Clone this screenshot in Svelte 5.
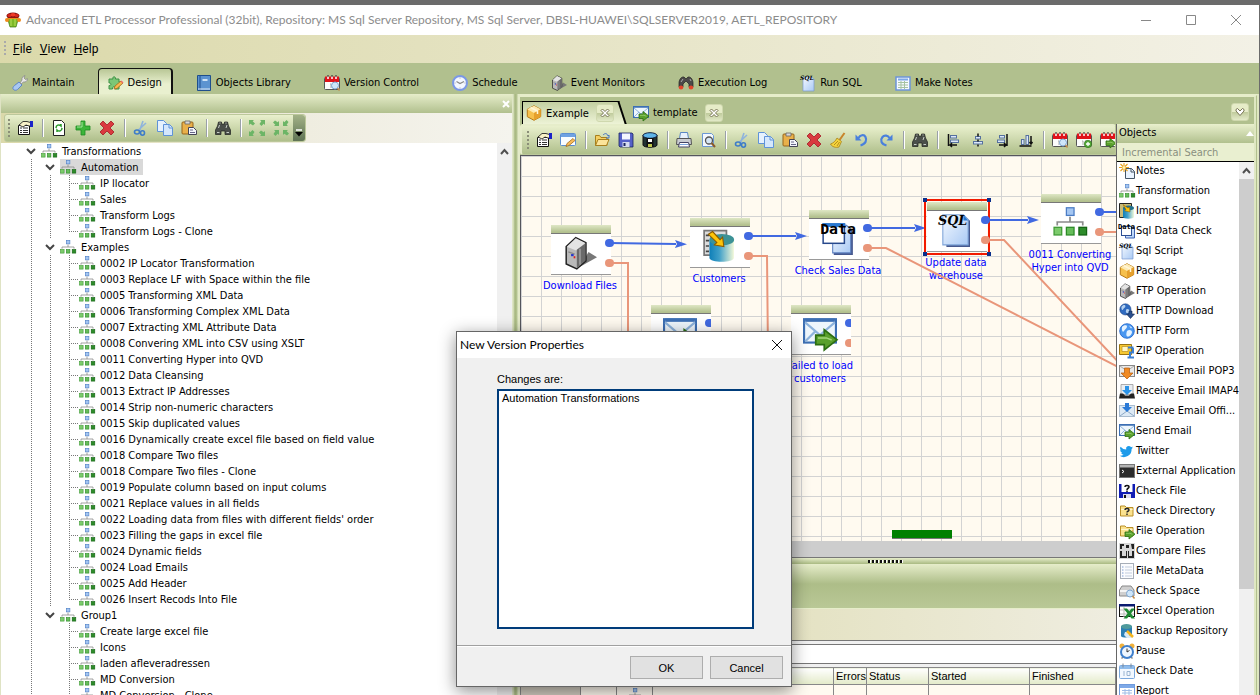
<script>
  const envelope = '<rect x=".5" y="1.500" width="15" height="11" fill="#eef6fc" stroke="#3c6fb4"/><path d="M1 2h14" stroke="#3c6fb4" stroke-width="1.500"/><path d="M1 3l7 6 7-6M1 12l5-5M15 12l-5-5" fill="none" stroke="#8db3dc"/>';
  const greenArrow = '<path d="M6 9h4V6.500l6 4.700-6 4.800v-2.500H6z" fill="#5aa02c" stroke="#2c6e12" stroke-width=".8"/><path d="M7 10.300h4l2.500 1" fill="none" stroke="#a4d67c" stroke-width=".7"/>';
  const calendar = '<rect x=".5" y="2.500" width="15" height="12" rx="1" fill="#fdfdfd" stroke="#555"/><path d="M1 1.500h14v5.500H1z" fill="#e0121a"/><path d="M4 1v3M8 1v3M12 1v3" stroke="#fff" stroke-width="1.500"/><path d="M4 0v2M8 0v2M12 0v2" stroke="#222"/><path d="M6 9h1v4M9 9h2l-1 4" fill="none" stroke="#aaa"/>';
  const lens = '<circle cx="11" cy="10.500" r="3.500" fill="#cfe6fa" stroke="#7fa6cf"/><path d="M13.500 13l2 2.500" stroke="#c08a4a" stroke-width="1.500"/>';
  const floppy = (c) => `<path d="M1 1h13l1 1v13H2l-1-1z" fill="${c}" stroke="#1b2460" stroke-width=".8"/><path d="M4 1.500h8v6H4z" fill="#f4f6ff"/><path d="M4.500 10h7v5h-7z" fill="#d5daf0"/><path d="M5.500 11h2v3h-2z" fill="#1b2460"/>`;
  const globe = '<circle cx="8" cy="8" r="7" fill="#2f6bc0" stroke="#1a3f80" stroke-width=".7"/><path d="M3 5c2-3 5-3 5-1s-2 2-3 4-2 0-2-3zM9 8c2-1 4 0 4 2s-3 4-4 2 0-2 0-4z" fill="#b4d1f0"/>';
  const glass = '<path d="M3.500 2h3v2h3V2h3l1 4 2 4v4.500h-5.500V11h-4v3.500H.500V10l2-4z" fill="#4a4f4a" stroke="#1c201c" stroke-width=".7"/><path d="M3.500 8l1-3M11 8l1-3M2 12.500h2.500M11.500 12.500H14M4.500 3h1M10.500 3h1" stroke="#c8cec8"/>';
  const folder = '<path d="M1.500 13.500v-10h4l1.500 2h6v8z" fill="#f4cf62" stroke="#a87f1c"/><path d="M1.500 13.500l2.500-6h11l-2.500 6z" fill="#fbe49a" stroke="#a87f1c"/>';
  const dirShape = '<path d="M1.500 13V3h4.500l1.500 1.500H14V13z" fill="#fbe28e" stroke="#b98f28"/><path d="M2 6.500h11.500" stroke="#fff6cf"/>';
  const serverShape = '<path d="M8 14.500l8-4.500-4-2.500z" fill="#777"/><path d="M1.500 5L6 .800l4.800 2.400v8.500L6.500 15.500l-5-2.300z" fill="#b9b9b9" stroke="#222" stroke-width=".7"/><path d="M1.800 5L6 1.100l4.500 2.200-4.300 3.500z" fill="#e4e4e4"/><path d="M6.500 6.500l4-3v8L6.500 15z" fill="#6a6a6a"/><path d="M8 6v7.500" stroke="#9a9a9a" stroke-width=".8"/><path d="M2.500 7.500l3 1" stroke="#888" stroke-width=".6"/><path d="M3.800 9h1.200" stroke="#23c"/><path d="M5 10h.8" stroke="#d22"/>';
  const importShape = '<path d="M1 .8h10.500v11.500H1z" fill="#dcdcdc" stroke="#777" stroke-width=".8"/><path d="M1.800 3h1.500M1.800 5.500h1.500M1.800 8h1.500M1.800 10.500h1.500" stroke="#444" stroke-width=".8"/><path d="M3.500 5v8.500c0 2.500 11.500 2.500 11.500 0V5z" fill="url(#cyl)"/><ellipse cx="9.300" cy="5" rx="5.800" ry="2.700" fill="#3c9296"/><path d="M3 2.500l2-1.300L8.500 5l1.200-1.200.6 4.500-4.500-.8L7 6.300z" fill="#fdc40a" stroke="#8a5a00" stroke-width=".5"/>';
  const box = '<path d="M8 .7l6.700 3.600v7.400L8 15.300 1.300 11.700V4.300z" fill="#f6c04c" stroke="#b87a16"/><path d="M1.300 4.300L8 8l6.700-3.700L8 .7z" fill="#fdeab2"/><path d="M8 8v7.300l6.700-3.600V4.300z" fill="#e6a02c"/><path d="M4.500 2.500L11.500 6v3" fill="none" stroke="#fff6d8" stroke-width="1.500"/>';
  const tree = '<rect x="6.300" y="1.300" width="3.600" height="3.600" fill="#a4c6f2" stroke="#4b7cc4" stroke-width=".6"/><path d="M8 5.500v2.500M2 9.700V8h12v1.700" fill="none" stroke="#8a8a8a" stroke-width=".8"/><g stroke-width=".6"><rect x=".5" y="10.500" width="3.600" height="3.600" fill="#7ccb6c" stroke="#3f9a35"/><rect x="6.300" y="10.500" width="3.600" height="3.600" fill="#66bd5a" stroke="#2c8a27"/><rect x="12.200" y="10.500" width="3.600" height="3.600" fill="#2d8c2a" stroke="#136312"/></g>';
  const align = (bars, line) => `<g fill="#dbe7f8" stroke="#55709e">${bars}</g><path d="${line}" stroke="#111" fill="none" stroke-width="1.500"/>`;

  const icons = {
    pot: '<path d="M3 5h10v3l-2 7H5L3 8z" fill="#7db928" stroke="#3e7a10" stroke-width=".7"/><path d="M6 6v8M10 6v8" stroke="#b7e05a"/><circle cx="2" cy="8" r="2" fill="#f08a1c"/><circle cx="14" cy="8" r="2" fill="#f08a1c"/><ellipse cx="8" cy="3.800" rx="6.500" ry="3.300" fill="#8c1410"/><ellipse cx="4.500" cy="3.500" rx="2" ry="1.500" fill="#d8281c"/><ellipse cx="11.500" cy="3.500" rx="2" ry="1.500" fill="#d8281c"/><ellipse cx="8" cy="2.800" rx="2.500" ry="1.800" fill="#f03a26"/><path d="M3 6.500h10" stroke="#f08a1c"/>',
    wrench: '<path d="M1.500 14.500c-1.500-1.500 0-3 1-4L7 7l3 3-4.500 4.500c-1 1-3 1-4 0z" fill="#a9c8f2" stroke="#5d86c8"/><path d="M8 8l2-3c-.5-2 1-4 3-4.500L12 3l1.500 1.500 2-.8c0 2.300-2 3.800-4 3.300L9 9z" fill="#e8e8e8" stroke="#8a8a8a" stroke-width=".8"/>',
    puzzle: '<path d="M1 4h4c-1-3 3-3 2.500 0H11v3c3-1 3 3.500 0 3v4H7c1-3-3-3-2.500 0H1v-3.500C3.500 11 3.500 7.500 1 8z" fill="#7cc776" stroke="#3c9145"/><path d="M6 14l1-3 6-5 2 2-6 5.500z" fill="#f8b84e" stroke="#a3691a" stroke-width=".8"/><path d="M13 6l2 2" stroke="#e66" stroke-width="1.500"/>',
    book: '<path d="M1.500.5h13v15h-13z" fill="#5c93d0" stroke="#1f4f8c"/><path d="M4 1v14" stroke="#1f4f8c"/><path d="M6.500 4h5v2h-5z" fill="#cfe3f6"/><path d="M2 14h12" stroke="#dfeaf6"/>',
    calsearch: calendar + lens,
    calplus: calendar + '<circle cx="12" cy="12" r="3.700" fill="#54a83a" stroke="#2c6e12" stroke-width=".6"/><path d="M12 10v4M10 12h4" stroke="#fff" stroke-width="1.300"/>',
    calgo: calendar + greenArrow,
    clock: '<circle cx="8" cy="8" r="7" fill="#f4f8ff" stroke="#7b98e6" stroke-width="2"/><path d="M4.500 6.500L8 8.500l4-2" fill="none" stroke="#888" stroke-width="1.200"/><path d="M8 2.500v1M8 12.500v1M2.500 8h1M12.500 8h1" stroke="#99a"/>',
    server: serverShape,
    magnet: '<path d="M1 12V8c0-3 2-6 4-6h1l2 2 2-2h1c2 0 4 3 4 6v4h-4V9L8 6 5 9v3z" fill="#4b4848" stroke="#222" stroke-width=".7"/><path d="M3 7l2-3M12 4l1 2" stroke="#aaa"/><ellipse cx="3" cy="12.500" rx="2.300" ry="2" fill="#e2472c"/><ellipse cx="13" cy="12.500" rx="2.300" ry="2" fill="#e2472c"/>',
    sql: '<path d="M3 2h8.500L14 4.500V16H3z" fill="url(#pg)" stroke="#7a9ad0" stroke-width=".7"/><text x="0" y="5" font-size="6" font-weight="bold" font-style="italic" font-family="DejaVu Serif, serif">SQL</text>',
    note: '<rect x="1" y="2" width="14" height="13" fill="#f6faff" stroke="#6c94d8" stroke-width="1.500"/><path d="M3 4.500h10" stroke="#7ea8e8" stroke-width="2"/><path d="M3 7.500h10M3 10h10M3 12.500h10M6 6v8M9.500 6v8" stroke="#a6c3a2"/>',
    props: '<path d="M1.500 5.500h11v9h-11z" fill="#fff" stroke="#111"/><path d="M3 8h2M6 8h5M3 10.500h2M6 10.500h5M3 12.500h2M6 12.500h5" stroke="#333"/><path d="M2 5l4-3.500h4l5 1.500v3h-3L9 5 6 7z" fill="#f8f2c8" stroke="#111" stroke-width=".8"/><path d="M13 1h3v6h-3z" fill="#1a22c8"/>',
    refresh: '<path d="M2.500.5h8l3 3v12h-11z" fill="#fff" stroke="#222"/><path d="M5 8c0-3 3-4 5-2V4M11 8c0 3-3 4-5 2v2" fill="none" stroke="#2a9a2a" stroke-width="1.500"/>',
    plus: '<path d="M6 1h4v5h5v4h-5v5H6v-5H1V6h5z" fill="#3db53a" stroke="#1f8a22" stroke-width=".8"/><path d="M7 2v5H2" fill="none" stroke="#a5e69c"/>',
    cross: '<path d="M1 4l3-3 4 4 4-4 3 3-4 4 4 4-3 3-4-4-4 4-3-3 4-4z" fill="#d93a3f" stroke="#a31c24" stroke-width=".8"/>',
    cut: '<path d="M10 1L6.500 11M13 3L5.500 10" stroke="#8fb3dc" stroke-width="1.600"/><ellipse cx="4" cy="12" rx="2.500" ry="2" fill="none" stroke="#3d7cc9" stroke-width="1.600"/><ellipse cx="9.500" cy="13" rx="2" ry="2.200" fill="none" stroke="#3d7cc9" stroke-width="1.600"/>',
    copy: '<path d="M.5.500h6l3 3v8h-9z" fill="#e6f1fd" stroke="#5f93d8"/><path d="M6.500 4.500h6l3 3v8h-9z" fill="#d5e7fc" stroke="#5f93d8"/><path d="M12 4.500V8h3.500" fill="none" stroke="#5f93d8"/>',
    paste: '<rect x="1" y="2" width="11" height="12" rx="1" fill="#e9b04a" stroke="#96651a"/><path d="M4 1h5v3H4z" fill="#d8d8d8" stroke="#666" stroke-width=".8"/><path d="M7.500 7.500h5l3 3v4h-8z" fill="#f3f6fb" stroke="#445"/><path d="M9 10h3M9 12.500h5" stroke="#668"/>',
    find: glass,
    expand: '<g fill="#6cb566"><path d="M0 0h5L3.700 1.300 6 3.500 4 5.500 1.300 3.700 0 5z"/><path d="M16 0v5l-1.300-1.300L12.500 6l-2-2 1.800-2.700L11 0z"/><path d="M0 16v-5l1.300 1.300L3.500 10l2 2-1.800 2.700L5 16z"/><path d="M16 16h-5l1.300-1.300L10 12.500l2-2 2.700 1.800L16 11z"/></g>',
    collapse: '<g fill="#6cb566"><path d="M6 6H1l1.300-1.300L0 2.500l2-2 2.700 1.800L6 1z"/><path d="M10 6V1l1.300 1.300L13.500 0l2 2-1.800 2.700L15 6z"/><path d="M6 10v5l-1.300-1.300L2.500 16l-2-2 1.800-2.700L1 10z"/><path d="M10 10h5l-1.300 1.300L16 13.500l-2 2-2.700-1.800L10 15z"/></g>',
    box,
    send: envelope + greenArrow,
    edit: '<rect x=".5" y="1.500" width="15" height="12" rx="1" fill="#fafdff" stroke="#5d8fd0"/><path d="M1 2h14v3H1z" fill="#6fa2e2"/><path d="M6 14.500l1-3 6-5 2 2-6 5z" fill="#f8bc5a" stroke="#a3691a" stroke-width=".8"/>',
    open: folder + '<path d="M9 3c2-2 4-2 5 1l1-1v3h-3" fill="none" stroke="#4472c4"/>',
    save: floppy('#5560c8'),
    savedb: '<path d="M1 3v10c0 3 14 3 14 0V3z" fill="#233" stroke="#111"/><ellipse cx="8" cy="3.500" rx="7" ry="2.800" fill="#5fb4e8" stroke="#124"/><path d="M4.500 6h7v9h-7z" fill="#111"/><path d="M6 7h4v3H6z" fill="#fff"/><path d="M6 12h4v3H6z" fill="#bfc94a"/>',
    print: '<path d="M4.500.5h7l1 6h-9z" fill="#e8f1fc" stroke="#5b87c4"/><path d="M1 6.500h14l.5 6h-15z" fill="#c9ccd2" stroke="#555"/><path d="M3.500 10.500h9l1 4.500h-11z" fill="#fff" stroke="#446"/><path d="M4 12.500h8" stroke="#7aa4de"/>',
    preview: '<path d="M2.500 1.500h9l2 2v11h-11z" fill="#f2f8ff" stroke="#6c98d4"/><circle cx="9" cy="8.500" r="3.500" fill="#d7e7f5" stroke="#555" stroke-width="1.300"/><path d="M11.500 11l3.500 4" stroke="#8a5a2a" stroke-width="2"/>',
    broom: '<path d="M14.500 1l-5 7" stroke="#c8842a" stroke-width="2"/><path d="M7 6l4.500 3.500L9 15c-3 1-7 0-8.500-3 3-1 5-3 6.500-6z" fill="#f4d43c" stroke="#a8821a" stroke-width=".8"/><path d="M4 13l4-4M7 14l2.500-4" stroke="#b98e1c"/>',
    undo: '<path d="M6.500 13.500C12 12 13 8 11.500 5 10 2 6 3 4.500 6" fill="none" stroke="#4a80dc" stroke-width="2.200"/><path d="M1.500 2.500v6h6z" fill="#4a80dc"/>',
    redo: '<path d="M8.500 13.500C3 12 2 8 4.500 5 6.500 2.500 10 3.500 11.500 6" fill="none" stroke="#4a80dc" stroke-width="2.200"/><path d="M14.500 2.500v6h-6z" fill="#4a80dc"/>',
    alignleft: align('<rect x="4.500" y="3.500" width="6" height="2.500"/><rect x="4.500" y="8" width="8" height="2.500"/>', 'M2.500 2v12M4 13h7M6 11l-2 2 2 2'),
    aligncenter: align('<rect x="5.500" y="4.500" width="5" height="2.500"/><rect x="3.500" y="9.500" width="9" height="2.500"/>', 'M8 1.500v3M8 7.500v2M8 12.500v2'),
    alignright: align('<rect x="5.500" y="3.500" width="5" height="2.500"/><rect x="3.500" y="8" width="7" height="2.500"/>', 'M13 2v12M11.500 13H5M10 11l2 2-2 2'),
    alignbottom: align('<rect x="3.500" y="7.500" width="2.500" height="5"/><rect x="8" y="3.500" width="2.500" height="9"/>', 'M1.500 14h12M13 4v8M11.500 10l1.500 2 1.500-2'),
    tree,
    notes: '<path d="M6.500 5.500h6l3 3v7h-9z" fill="#e9f3ff" stroke="#456"/><path d="M12 5.500V9h3.500" fill="none" stroke="#456"/><path d="M5 0v9M0 4.500h10M1.500 1l7 7M8.500 1l-7 7" stroke="#e8a21c" stroke-width="1.100"/><circle cx="5" cy="4.500" r="1.500" fill="#fff3b0"/>',
    importdb: importShape,
    importsmall: '<path d="M.5.500h12v14H.5z" fill="#c9bb78" stroke="#222"/><path d="M4 5v9c0 2.300 11 2.300 11 0V5z" fill="url(#cyl)"/><ellipse cx="9.500" cy="5" rx="5.500" ry="2.500" fill="#22708c"/><path d="M4 1.500L9 5l1.500-1L11 9 5.500 7.800 7 6.600z" fill="#fdc40a" stroke="#8a5a00" stroke-width=".5"/>',
    data: '<path d="M6.500 4.500h9v10.500h-9z" fill="url(#pg)" stroke="#3f62b0"/><rect x="2.500" y="3.500" width="10" height="9" fill="#fff" stroke="#2d4f94"/><text x="-1" y="5.500" font-size="7" font-weight="bold" font-family="DejaVu Sans Mono, monospace">Data</text>',
    globedown: '<g transform="scale(.8)">' + globe + '</g><path d="M10 8h3v3h2.500L11.500 15.500 7.500 11H10z" fill="#2a4f8e" stroke="#12294f" stroke-width=".6"/>',
    globe: '<circle cx="8" cy="8" r="7.300" fill="#4a97f0" stroke="#1a5fc8" stroke-width=".8"/><path d="M3 4c1.500-2 5-2.500 5-.5S6 6 5 8 2.500 8 3 4zM8 8c2-2 5-1 5 1s-2 4.500-4 4.500S7 11 8 8zM10 2.500l3 2-1 1z" fill="#e6f3ff"/>',
    zip: '<path d="M.5 1.500h12v10H.5z" fill="#f6c832" stroke="#9a7412"/><path d="M3 3.500h6v5H3z" fill="#fff7c8" stroke="#b78f1e" stroke-width=".7"/><path d="M9 4.500h5.500M14 5v4.500h-3v5M8.500 14.500H15" fill="none" stroke="#3a7fd4" stroke-width="2"/>',
    pop3: '<rect x=".5" y="2.500" width="15" height="11" fill="#e9e9e9" stroke="#888"/><path d="M1 3l7 5 7-5" fill="none" stroke="#aaa"/><path d="M5.500 5h5v5H14l-6 6-6-6h3.500z" fill="#f08a24" stroke="#b55a0c" stroke-width=".7"/>',
    imap: '<path d="M2 1.500h12v10H2z" fill="#e9edf2" stroke="#999" stroke-width=".8"/><path d="M0 15.500l1-5h3l2 2h4l2-2h3l1 5z" fill="#222"/><path d="M6 3h4v4h3l-5 5-5-5h3z" fill="#2a93e8"/>',
    office: '<rect x=".5" y="2.500" width="15" height="11" fill="#dce9f5" stroke="#a9bccf"/><path d="M1 13l7-5 7 5" fill="none" stroke="#8da9c6"/><path d="M6 0h4v4h3L8 9 3 4h3z" fill="#2a7ad8"/>',
    twitter: '<path d="M14 4.500c-.5.200-1 .3-1.600.4.600-.3 1-.8 1.200-1.500-.5.300-1.100.5-1.700.7A2.700 2.700 0 0 0 7.200 6.600 7.700 7.700 0 0 1 1.600 3.700 2.700 2.700 0 0 0 2.400 7.400c-.4 0-.8-.1-1.200-.3 0 1.300.9 2.400 2.100 2.700-.4.100-.8.1-1.200 0 .3 1.100 1.300 1.900 2.500 1.900A5.500 5.500 0 0 1 .6 12.800 7.700 7.700 0 0 0 12.600 6c.5-.4 1-.9 1.400-1.500z" fill="#1e9bea"/>',
    console: '<rect x=".5" y="1.500" width="15" height="13" fill="#2c2c2c" stroke="#777"/><path d="M1 2h14v2.500H1z" fill="#b4b4b4"/><path d="M3 7l2 1.500L3 10" fill="none" stroke="#fff"/>',
    checkfile: '<path d="M0 1h16v14H0z" fill="#101cb4"/><path d="M2.500 1h11v8h-11z" fill="#fff"/><path d="M4 11h8v4H4z" fill="#dde"/><path d="M5 12h2v3H5z" fill="#111"/><path d="M6 4c0-2 4-2 4 0 0 1.500-2 1-2 3M8 7.500V9" fill="none" stroke="#111" stroke-width="1.500"/>',
    checkdir: dirShape + '<path d="M6 7c0-2 4-2 4 0 0 1.500-2 1-2 2.500M8 10.500V12" fill="none" stroke="#222" stroke-width="1.400"/>',
    fileop: dirShape + greenArrow,
    compare: '<path d="M0 0h16v16H0z" fill="#d8d8d8"/><path d="M1 1h4v2H3v3H1zM7 2h3v3H7zM12 1h3v5h-2zM1 8h2v5h4V8h1v7H1zM9 8h1v5h3V8h2v7H9z" fill="#222"/>',
    meta: '<rect x="1.500" y=".5" width="13" height="15" fill="#fbfcfe" stroke="#a7aeb8"/><path d="M3 4h1.500M3 7h1.500M3 10h1.500M3 13h1.500" stroke="#7d9cd0"/><path d="M6 4h7M6 7h7M6 10h7M6 13h7" stroke="#c2cddd"/>',
    space: '<path d="M3 3h9l3 4v6H.5V7z" fill="#cfcfcf" stroke="#888"/><path d="M1 8h13" stroke="#f5f5f5" stroke-width="2"/>' + lens,
    excel: '<rect x=".5" y="1.500" width="15" height="12" fill="#fff" stroke="#111"/><path d="M0 1h16v2.500H0z" fill="#0a1a70"/><path d="M1 7h14M1 11h14M5 4v10" stroke="#bbb"/><path d="M4.500 5.500h3.500l2.300 2.800L12.500 5.500H16l-4 5 4 5h-3.500l-2.200-2.800L8 15.500H4.500l4-5z" fill="#1f8a34"/>',
    backup: '<path d="M2 3v10c0 2 11 2 11 0V3z" fill="#2c7fb4"/><ellipse cx="7.500" cy="3.500" rx="5.500" ry="2.500" fill="#4f9a9c"/><path d="M6 9h4v3l4 3h-6l-3-3z" fill="#d8eaf6"/><path d="M8 8l6 6" stroke="#f5b41c" stroke-width="2.500"/>',
    pause: '<circle cx="3" cy="3" r="2.500" fill="#f0b03a"/><circle cx="13" cy="3" r="2.500" fill="#f0b03a"/><path d="M2.500 15.500l2-2M13.500 15.500l-2-2" stroke="#888" stroke-width="1.500"/><circle cx="8" cy="9" r="6" fill="#eef6ff" stroke="#3f7fcc" stroke-width="2"/><path d="M8 5.500V9l2.500-1.500" fill="none" stroke="#333"/>',
    date: '<rect x=".5" y="2.500" width="15" height="13" rx="1" fill="#f2f8ff" stroke="#7ba8dc"/><path d="M1 3h14v3H1z" fill="#8fbcec"/><path d="M4 .5v4M12 .5v4" stroke="#7a8898"/><path d="M5 8v5M8 8.500h3v4H8z" fill="none" stroke="#9ab4d0"/>',
    report: '<rect x=".5" y="1.500" width="15" height="14" fill="#fff" stroke="#6f9bdc"/><path d="M1 2h14v3H1z" fill="#7ea9e8"/><path d="M3 7.500h10M3 10h10M3 12.500h10M6 6v9M10 6v9" stroke="#9fbde6"/>',
    bigsql: '<path d="M2.800 1.500h9.500l2.300 2.200V16H3.500z" fill="#46598f"/><path d="M1.800.800h9.700l2.200 2.200V15H1.800z" fill="url(#pg)" stroke="#7ea4d8" stroke-width=".5"/><path d="M11.500.800v2.700h2.200" fill="#2878d0"/><text x="-.5" y="5.800" font-size="6" font-weight="bold" font-style="italic" font-family="DejaVu Serif, serif">SQL</text>',
    bigdata: '<path d="M6 2.500h7l2 2V16H6z" fill="#46598f"/><path d="M5.500 2h6.500l2 2v11H5.500z" fill="url(#pg)" stroke="#5b7fc0" stroke-width=".5"/><rect x="1" y="1.500" width="10" height="9" fill="#fff" stroke="#27488c" stroke-width=".7"/><path d="M.7 1h10.700v1.800H.7z" fill="#2878d0"/><text x="-.4" y="6.300" font-size="7" font-weight="bold" font-family="DejaVu Sans Mono, monospace">Data</text>'
  };

  const modules = [
    ['wrench', 'Maintain'], ['puzzle', 'Design'], ['book', 'Objects Library'], ['calsearch', 'Version Control'],
    ['clock', 'Schedule'], ['server', 'Event Monitors'], ['magnet', 'Execution Log'], ['sql', 'Run SQL'], ['note', 'Make Notes']
  ];
  const treeTools = ['props', '|', 'refresh', 'plus', 'cross', '|', 'cut', 'copy', 'paste', '|', 'find', '|', 'expand', 'collapse'];
  const docTools = ['props', 'edit', '|', 'open', 'save', 'savedb', '|', 'print', 'preview', '|', 'cut', 'copy', 'paste', 'cross', 'broom', 'undo', 'redo', '|', 'find', '|', 'alignleft', 'aligncenter', 'alignright', 'alignbottom', '|', 'calsearch', 'calplus', 'calgo'];

  const groups = [
    ['Automation', ['IP llocator', 'Sales', 'Transform Logs', 'Transform Logs - Clone']],
    ['Examples', ['0002 IP Locator Transformation', '0003 Replace LF with Space within the file', '0005 Transforming XML Data', '0006 Transforming Complex XML Data', '0007 Extracting XML Attribute Data', '0008 Convering XML into CSV using XSLT', '0011 Converting Hyper into QVD', '0012 Data Cleansing', '0013 Extract IP Addresses', '0014 Strip non-numeric characters', '0015 Skip duplicated values', '0016 Dynamically create excel file based on field value', '0018 Compare Two files', '0018 Compare Two files - Clone', '0019 Populate column based on input colums', '0021 Replace values in all fields', "0022 Loading data from files with different fields' order", '0023 Filling the gaps in excel file', '0024 Dynamic fields', '0024 Load Emails', '0025 Add Header', '0026 Insert Recods Into File']],
    ['Group1', ['Create large excel file', 'Icons', 'laden afleveradressen', 'MD Conversion', 'MD Conversion - Clone']]
  ];

  const objects = [
    ['notes', 'Notes'], ['tree', 'Transformation'], ['importsmall', 'Import Script'], ['data', 'Sql Data Check'], ['sql', 'Sql Script'],
    ['box', 'Package'], ['server', 'FTP Operation'], ['globedown', 'HTTP Download'], ['globe', 'HTTP Form'], ['zip', 'ZIP Operation'],
    ['pop3', 'Receive Email POP3'], ['imap', 'Receive Email IMAP4'], ['office', 'Receive Email Offi...'], ['send', 'Send Email'], ['twitter', 'Twitter'],
    ['console', 'External Application'], ['checkfile', 'Check File'], ['checkdir', 'Check Directory'], ['fileop', 'File Operation'],
    ['compare', 'Compare Files'], ['meta', 'File MetaData'], ['space', 'Check Space'], ['excel', 'Excel Operation'],
    ['backup', 'Backup Repository'], ['pause', 'Pause'], ['date', 'Check Date'], ['report', 'Report']
  ];

  const nodes = [
    { x: 30, y: 69, icon: 'server', label: 'Download Files' },
    { x: 169, y: 62, icon: 'importdb', label: 'Customers' },
    { x: 288, y: 54, icon: 'bigdata', label: 'Check Sales Data' },
    { x: 406, y: 46, icon: 'bigsql', label: 'Update data warehouse', selected: true },
    { x: 520, y: 38, icon: 'tree', label: '0011 Converting Hyper into QVD' },
    { x: 130, y: 149, icon: 'send', label: '', clip: true },
    { x: 270, y: 149, icon: 'send', label: 'Failed to load customers', clip: true }
  ];
  const links = ['M89 87l66 1', 'M228 80h47', 'M347 72h47', 'M465 64h42', 'M579 56h60'];
  const errors = ['M89 107h18v90', 'M228 100h18l1 97', 'M347 92h18l240 123', 'M465 84h18l120 128', 'M579 76h60'];
  let search = $state('');
  let changes = $state('Automation Transformations');
</script>

{#snippet icon(name)}
  <svg class="icon" viewBox="0 0 16 16" aria-hidden="true">{@html icons[name]}</svg>
{/snippet}

{#snippet tools(list)}
  <span class="grip"></span>
  {#each list as t}
    {#if t === '|'}<span class="sep"></span>{:else}<button class="tool" aria-label={t}>{@render icon(t)}</button>{/if}
  {/each}
{/snippet}

{#snippet chevron()}
  <svg class="chev" viewBox="0 0 19 16" aria-hidden="true"><path d="M5 6l4 4 4-4" fill="none" stroke="#444" stroke-width="2" /></svg>
{/snippet}

{#snippet closer(name)}
  <button class="closer" aria-label={name}>
    <svg viewBox="0 0 10 10" aria-hidden="true"><path d="M1 2.500L2.500 1 5 3.500 7.500 1 9 2.500 6.500 5 9 7.500 7.500 9 5 6.500 2.500 9 1 7.500 3.500 5z" fill="#fff" stroke="#6a6544" stroke-width=".9" /></svg>
  </button>
{/snippet}

<svg class="defs" aria-hidden="true">
  <defs>
    <linearGradient id="pg" x1="0" y1="0" x2="1" y2="1"><stop offset="0" stop-color="#f4f9ff" /><stop offset="1" stop-color="#a9c9f4" /></linearGradient>
    <linearGradient id="cyl"><stop offset="0" stop-color="#0f7fb8" /><stop offset=".4" stop-color="#3f9fc8" /><stop offset="1" stop-color="#f2f8d8" /></linearGradient>
  </defs>
</svg>

<div class="window">
  <header class="title">
    {@render icon('pot')}
    <h1>Advanced ETL Processor Professional (32bit), Repository: MS Sql Server Repository, MS Sql Server, DBSL-HUAWEI\SQLSERVER2019, AETL_REPOSITORY</h1>
    <div class="sys">
      <button aria-label="Minimize"><svg viewBox="0 0 10 10"><path d="M0 5.500h10" /></svg></button>
      <button aria-label="Maximize"><svg viewBox="0 0 10 10"><path d="M.5.500h9v9h-9z" /></svg></button>
      <button aria-label="Close"><svg viewBox="0 0 10 10"><path d="M0 0l10 10M10 0L0 10" /></svg></button>
    </div>
  </header>

  <nav class="menu">
    <span class="grip"></span>
    <button><u>F</u>ile</button><button><u>V</u>iew</button><button><u>H</u>elp</button>
  </nav>

  <nav class="modules">
    {#each modules as [ic, name]}
      <button class:active={name === 'Design'}>{@render icon(ic)}{name}</button>
    {/each}
  </nav>

  <main>
    <aside class="left">
      <div class="panehead"><button aria-label="Close pane"><svg viewBox="0 0 8 8"><path d="M1 1l6 6M7 1L1 7" stroke="#fff" stroke-width="2" /></svg></button></div>
      <div class="barrow"><div class="toolbar">{@render tools(treeTools)}<span class="more"><svg viewBox="0 0 8 8"><path d="M1 1h6" stroke="#fff" stroke-width="1.500" /><path d="M0 3h8L4 7.500z" fill="#000" /></svg></span></div></div>
      <div class="treewrap">
        <ul class="tree">
          <li class="row">{@render chevron()}<span class="hit">{@render icon('tree')}Transformations</span></li>
          {#each groups as [name, items], g}
            <li class="row"><i class="guide"></i>{@render chevron()}<span class="hit" class:sel={g === 0}>{@render icon('tree')}{name}</span></li>
            {#each items as item, n}
              <li class="row">
                <i class="guide"></i><i class="guide" class:none={g === 2}></i><i class="guide elbow" class:last={g < 2 && n === items.length - 1}></i>
                <span class="hit">{@render icon('tree')}{item}</span>
              </li>
            {/each}
          {/each}
        </ul>
        <div class="scroll"><svg viewBox="0 0 15 17"><path d="M4 11l3.500-4 3.500 4" fill="none" stroke="#505050" stroke-width="2" /></svg></div>
      </div>
    </aside>

    <div class="vsplit"></div>

    <section class="right">
      <div class="doctabs">
        <div class="doctab on">{@render icon('box')}<span>Example</span>{@render closer('Close Example')}</div>
        <div class="doctab">{@render icon('send')}<span>template</span>{@render closer('Close template')}</div>
        <button class="closer list" aria-label="Tab list"><svg viewBox="0 0 10 10"><path d="M1 2.500L2.500 1.500 5 4l2.500-2.500L9 2.500v1.500L5 8.500 1 4z" fill="#fff" stroke="#6a6544" stroke-width=".9" /></svg></button>
      </div>
      <div class="work">
        <div class="doc">
          <div class="toolbar wide">{@render tools(docTools)}</div>
          <div class="canvas">
            <svg class="wires" aria-hidden="true">
              <defs>
                <marker id="tip" viewBox="0 0 12 8" refX="1" refY="4" markerWidth="12" markerHeight="8" markerUnits="userSpaceOnUse" orient="auto"><path d="M0 0l12 4-12 4 2-4z" fill="#4169e1" /></marker>
              </defs>
              {#each links as d}<path {d} fill="none" stroke="#4169e1" stroke-width="2" marker-end="url(#tip)" />{/each}
            </svg>
            {#each nodes as n}
              <div class="node" class:selected={n.selected} class:clip={n.clip} style="left:{n.x}px;top:{n.y}px">
                <div class="card">
                  <div class="pic">{@render icon(n.icon)}</div>
                  <b class="port"></b><b class="port err"></b>
                </div>
                <p>{n.label}</p>
                {#if n.selected}<em></em><em></em><em></em><em></em>{/if}
              </div>
            {/each}
            <svg class="wires" aria-hidden="true">
              {#each errors as d}<path {d} fill="none" stroke="#e9967a" stroke-width="2" />{/each}
            </svg>
            <div class="greenbar"></div>
          </div>
          <div class="hscroll"></div>
          <div class="hsplit"><span></span></div>
          <div class="logband"></div>
          <div class="logtools"></div>
          <div class="logfilter"><div></div></div>
          <div class="log">
            <table>
              <colgroup><col class="c0" /><col class="c1" /><col class="c1" /><col class="c2" /><col class="c3" /><col class="c4" /><col class="c5" /><col /></colgroup>
              <thead><tr><th></th><th></th><th></th><th></th><th>Errors</th><th>Status</th><th>Started</th><th>Finished</th></tr></thead>
              <tbody><tr><td></td><td></td><td>{@render icon('tree')}</td><td></td><td></td><td></td><td></td><td></td></tr></tbody>
            </table>
          </div>
        </div>

        <aside class="objects">
          <h2>Objects <svg viewBox="0 0 8 5"><path d="M0 5l4-5 4 5z" fill="#fff" /></svg></h2>
          <input type="text" aria-label="Incremental Search" placeholder="Incremental Search" bind:value={search} />
          <div class="objwrap">
            <ul>
              {#each objects as [ic, name]}<li>{@render icon(ic)}{name}</li>{/each}
            </ul>
            <div class="scroll"><svg viewBox="0 0 15 17"><path d="M4 11l3.500-4 3.500 4" fill="none" stroke="#505050" stroke-width="2" /></svg><span class="thumb"></span></div>
          </div>
        </aside>
      </div>
    </section>
  </main>

  <div class="dialog" role="dialog" aria-labelledby="dlg">
    <header><h2 id="dlg">New Version Properties</h2><button aria-label="Close dialog"><svg viewBox="0 0 10 10"><path d="M0 0l10 10M10 0L0 10" stroke="#111" /></svg></button></header>
    <div class="body">
      <label for="chg">Changes are:</label>
      <textarea id="chg" spellcheck="false" bind:value={changes}></textarea>
    </div>
    <footer><button>OK</button><button>Cancel</button></footer>
  </div>
</div>

<style>
  :global(body) { margin: 0; background: #6b6b6b; }
  * { box-sizing: border-box; }
  .window { height: 100vh; overflow: hidden; display: flex; flex-direction: column; position: relative; border-top: 5px solid #6b6b6b; border-right: 1px solid #6b6b6b; background: #b1c08e; font: 11px/16px "DejaVu Sans Condensed", "DejaVu Sans", sans-serif; color: #000; }
  button { font: inherit; color: inherit; background: none; border: 0; padding: 0; margin: 0; display: flex; align-items: center; justify-content: center; white-space: nowrap; }
  ul { list-style: none; margin: 0; padding: 0; }
  h1, h2, p { margin: 0; font-weight: normal; }
  .icon { width: 16px; height: 16px; flex: none; overflow: visible; display: block; }
  .defs { position: absolute; width: 0; height: 0; }

  .title { height: 30px; flex: none; background: #fff; display: flex; align-items: center; padding: 0 5px; gap: 5px; color: #8c8c8c; }
  .title h1 { font: 12px/16px Lato, sans-serif; white-space: nowrap; flex: 1; }
  .sys { display: flex; }
  .sys button { width: 45px; height: 28px; }
  .sys button:last-child { width: 36px; margin-left: 5px; }
  .sys svg { width: 10px; height: 10px; fill: none; stroke: #888; overflow: visible; }

  .menu { height: 28px; flex: none; display: flex; align-items: center; gap: 8px; padding-left: 4px; background: linear-gradient(90deg, #dbd9aa, #f3f1e6); font: 12px/16px Roboto, sans-serif; }
  .grip { width: 2px; height: 16px; flex: none; background: repeating-linear-gradient(#8b8f78 0 2px, transparent 2px 4px); }
  .menu .grip { margin-right: -1px; background: repeating-linear-gradient(#aaa 0 2px, transparent 2px 4px); }

  .modules { height: 31px; flex: none; display: flex; align-items: flex-end; gap: 13px; padding-left: 2px; }
  .modules button { height: 26px; padding: 2px 9px 0; gap: 4px; border: 1px solid transparent; border-bottom: 0; }
  .modules .active { border-color: #111; border-right-width: 2px; border-radius: 4px 4px 0 0; background: linear-gradient(#b9c796, #e9f0cf 60%); }

  main { flex: 1; min-height: 0; display: grid; grid-template-columns: 512px 8px minmax(0, 1fr); }
  .left { display: flex; flex-direction: column; min-height: 0; border-left: 1px solid #dfe3c4; }
  .panehead { height: 19px; flex: none; background: linear-gradient(#e6edca, #b1c08e); display: flex; justify-content: flex-end; align-items: center; padding-right: 2px; }
  .panehead button svg { width: 8px; height: 8px; }
  .barrow { height: 30px; flex: none; background: linear-gradient(90deg, #dbd9aa, #efede0 60%, #f5f4ee); padding: 1px 3px; }
  .toolbar { display: flex; align-items: center; height: 28px; background: linear-gradient(#e9f0cd, #afbf8b); border: 1px solid #bcc89b; border-radius: 3px; }
  .barrow .toolbar { width: max-content; padding-left: 3px; }
  .toolbar .grip { height: 18px; margin-right: 3px; }
  .tool { width: 24px; height: 24px; flex: none; }
  .sep { width: 10px; height: 18px; flex: none; background: linear-gradient(90deg, transparent 5px, #9aa0a8 5px 6px, #fff 6px 7px, transparent 7px); }
  .more { align-self: stretch; width: 12px; background: linear-gradient(#a3b287, #5f7355); display: flex; align-items: flex-end; justify-content: center; padding-bottom: 4px; border-radius: 0 3px 3px 0; }
  .more svg { width: 8px; height: 8px; }

  .treewrap { flex: 1; min-height: 0; display: flex; background: #fff; overflow: hidden; }
  .tree { flex: 1; min-width: 0; }
  .row { display: flex; height: 16px; padding-left: 21px; white-space: nowrap; }
  .chev { width: 19px; height: 16px; flex: none; }
  .guide { width: 19px; flex: none; background: repeating-linear-gradient(#777 0 1px, transparent 1px 2px) 9px 0 / 1px 100% no-repeat; }
  .guide.none { background: none; }
  .elbow { background: repeating-linear-gradient(#777 0 1px, transparent 1px 2px) 9px 0 / 1px 100% no-repeat, repeating-linear-gradient(90deg, #777 0 1px, transparent 1px 2px) 9px 8px / 10px 1px no-repeat; }
  .elbow.last { background-size: 1px 8px, 10px 1px; }
  .hit { display: flex; gap: 5px; padding-right: 4px; line-height: 18px; }
  .sel { background: #d9d9d9; }
  .scroll { width: 15px; flex: none; background: #f0f0f0; display: flex; flex-direction: column; }
  .scroll svg { width: 15px; height: 17px; flex: none; }
  .vsplit { background: linear-gradient(90deg, #dfe6c6 1px, #a5b67e 3px, #b6c593 5px, #e3eac8 6px, #e3eac8); }

  .right { min-width: 0; min-height: 0; display: flex; flex-direction: column; border-top: 3px solid #e6edca; border-right: 5px double #dfe7c2; background: #b1c08e; }
  .doctabs { height: 27px; flex: none; display: flex; align-items: flex-end; padding: 0 5px 0 2px; }
  .doctab { height: 23px; display: flex; align-items: center; gap: 4px; padding: 0 0 0 4px; position: relative; }
  .doctab span { margin-right: 3px; line-height: 18px; padding-top: 1px; }
  .doctab.on { padding: 0 5px 0 3px; border: 1px solid #000; border-width: 1px 0 0 1px; background: linear-gradient(#c3cfa2, #edf3d6); margin-right: 10px; }
  .doctab.on::after { content: ""; position: absolute; right: -4px; top: -1px; bottom: 0; width: 10px; border-top: 1px solid #000; border-right: 2px solid #000; background: linear-gradient(#c3cfa2, #edf3d6); transform: skewX(18deg); }
  .closer { width: 18px; height: 18px; border-radius: 3px; background: linear-gradient(#e6ecc8 50%, #bfca9b 50%, #e3eac8); border: 1px solid #cfd8ae; position: relative; z-index: 1; }
  .closer svg { width: 10px; height: 10px; }
  .list { margin: 0 0 3px auto; }
  .work { flex: 1; min-height: 0; display: flex; }
  .doc { flex: 1; min-width: 0; min-height: 0; display: flex; flex-direction: column; overflow: hidden; }
  .wide { height: 31px; flex: none; padding-left: 5px; border-left: 2px solid #e6edca; border-top: 2px solid #e6edca; overflow: hidden; }
  .canvas { flex: 1; min-height: 0; position: relative; overflow: hidden; border: solid #55555c; border-width: 1px 0 0 1px; background: #fffaf0 repeating-linear-gradient(#d3d3d3 0 1px, transparent 1px 20px); }
  .canvas::before { content: ""; position: absolute; inset: 0; background: repeating-linear-gradient(90deg, #d3d3d3 0 1px, transparent 1px 20px); }
  .wires { position: absolute; inset: 0; width: 100%; height: 100%; }
  .node { position: absolute; width: 60px; color: #00f; }
  .card { height: 50px; background: linear-gradient(#dfe7c5, #b3c18f 7px, #b3c18f 8px, #777 8px, #777 9px, #fff 9px); border-bottom: 1px solid #999; position: relative; }
  .clip .card { overflow: hidden; }
  .pic { padding: 11px 0 0 12px; }
  .pic .icon { width: 34px; height: 34px; }
  .port { position: absolute; left: 54px; top: 14px; width: 9px; height: 8px; border-radius: 5px; background: #4169e1; }
  .err { top: 34px; background: #e9967a; }
  .node p { width: 90px; margin: 4px -16px 0; text-align: center; line-height: 13px; }
  .selected .card { outline: 2px solid #f21a00; outline-offset: 1px; }
  .selected em { position: absolute; width: 4px; height: 4px; background: #0a2f8c; left: -4px; top: -4px; }
  .selected em:nth-of-type(2) { left: 60px; }
  .selected em:nth-of-type(3) { top: 50px; }
  .selected em:nth-of-type(4) { left: 60px; top: 50px; }
  .greenbar { position: absolute; left: 371px; top: 374px; width: 60px; height: 9px; background: #008000; border-bottom: 1px solid #777; }
  .hscroll { height: 16px; flex: none; background: #cdcdcd; border-left: 1px solid #55555c; }
  .hsplit { height: 7px; flex: none; border-top: 1px solid #777; background: linear-gradient(#e6edca, #a9ba82); display: flex; justify-content: center; align-items: center; padding-left: 136px; }
  .hsplit span { width: 36px; height: 3px; background: repeating-linear-gradient(90deg, #111 0 2px, #fff 2px 3px, transparent 3px 4px); }
  .logband { height: 45px; flex: none; background: linear-gradient(#e6edca, #adbd88 20px, #b9c896); border-bottom: 1px solid #e6edca; }
  .logtools { height: 32px; flex: none; background: linear-gradient(90deg, #dbd9aa, #efede0); border-bottom: 1px solid #777; }
  .logfilter { flex: none; padding: 3px 0; background: #f0f0f0; }
  .logfilter div { height: 20px; background: #fff; border: 1px solid #777; border-right: 0; }
  .log { height: 28px; flex: none; overflow: hidden; background: #fffaf0; }
  table { width: 100%; table-layout: fixed; border-collapse: collapse; background: #fffaf0; }
  .c0 { width: 60px; } .c1 { width: 36px; } .c2 { width: 181px; } .c3 { width: 33px; } .c4 { width: 62px; } .c5 { width: 101px; }
  th, td { border: 1px solid #888; padding: 0 2px; text-align: left; font-weight: normal; font-size: 11px; line-height: 15px; overflow: hidden; white-space: nowrap; }
  th { background: linear-gradient(#fff, #e3eac8); height: 17px; font-family: "Liberation Sans", sans-serif; }
  td { height: 20px; }
  td:first-child { background: #d2ccc0; }
  td .icon { margin: 0 auto; }

  .objects { width: 138px; flex: none; display: flex; flex-direction: column; min-height: 0; border-left: 1px solid #666; }
  .objects h2 { height: 19px; flex: none; font-size: 11px; line-height: 16px; display: flex; justify-content: space-between; align-items: center; padding: 0 0 1px 2px; background: linear-gradient(#e9f0cd, #b1c08e); }
  .objects h2 svg { width: 8px; height: 5px; }
  .objects input { height: 19px; flex: none; width: 100%; border: 0; border-bottom: 1px solid #000; padding: 0 5px; background: #e9efd0; font: inherit; outline: 0; }
  .objects input::placeholder { color: #8a8f80; opacity: 1; }
  .objwrap { flex: 1; min-height: 0; display: flex; background: #fff; overflow: hidden; }
  .objwrap ul { flex: 1; min-width: 0; margin-top: -1px; }
  .objwrap li { display: flex; align-items: center; gap: 1px; height: 20px; padding-left: 2px; white-space: nowrap; }
  .thumb { flex: 0 0 77%; background: #cdcdcd; }

  .dialog { position: absolute; left: 456px; top: 326px; width: 336px; height: 356px; display: flex; flex-direction: column; background: #f0f0f0; border: 1px solid #666; box-shadow: 0 4px 16px rgba(0, 0, 0, .45); font-family: "Liberation Sans", sans-serif; }
  .dialog header { height: 26px; flex: none; background: #fff; display: flex; align-items: center; justify-content: space-between; padding: 0 9px 0 3px; }
  .dialog h2 { font: 12px/16px Lato, sans-serif; }
  .dialog header svg { width: 10px; height: 10px; overflow: visible; }
  .body { flex: 1; min-height: 0; display: flex; flex-direction: column; gap: 2px; padding: 13px 37px 16px 40px; }
  textarea { flex: 1; resize: none; border: 2px solid #003c7a; outline: 0; border-radius: 0; padding: 0 3px; margin: 0; background: #fff; font: inherit; line-height: 15px; color: inherit; }
  .dialog footer { height: 41px; flex: none; border-top: 1px solid #a0a0a0; box-shadow: inset 0 1px #fff; display: flex; justify-content: flex-end; gap: 7px; padding: 10px 8px 0; }
  .dialog footer button { width: 73px; height: 23px; background: #e1e1e1; border: 1px solid #adadad; }
</style>
